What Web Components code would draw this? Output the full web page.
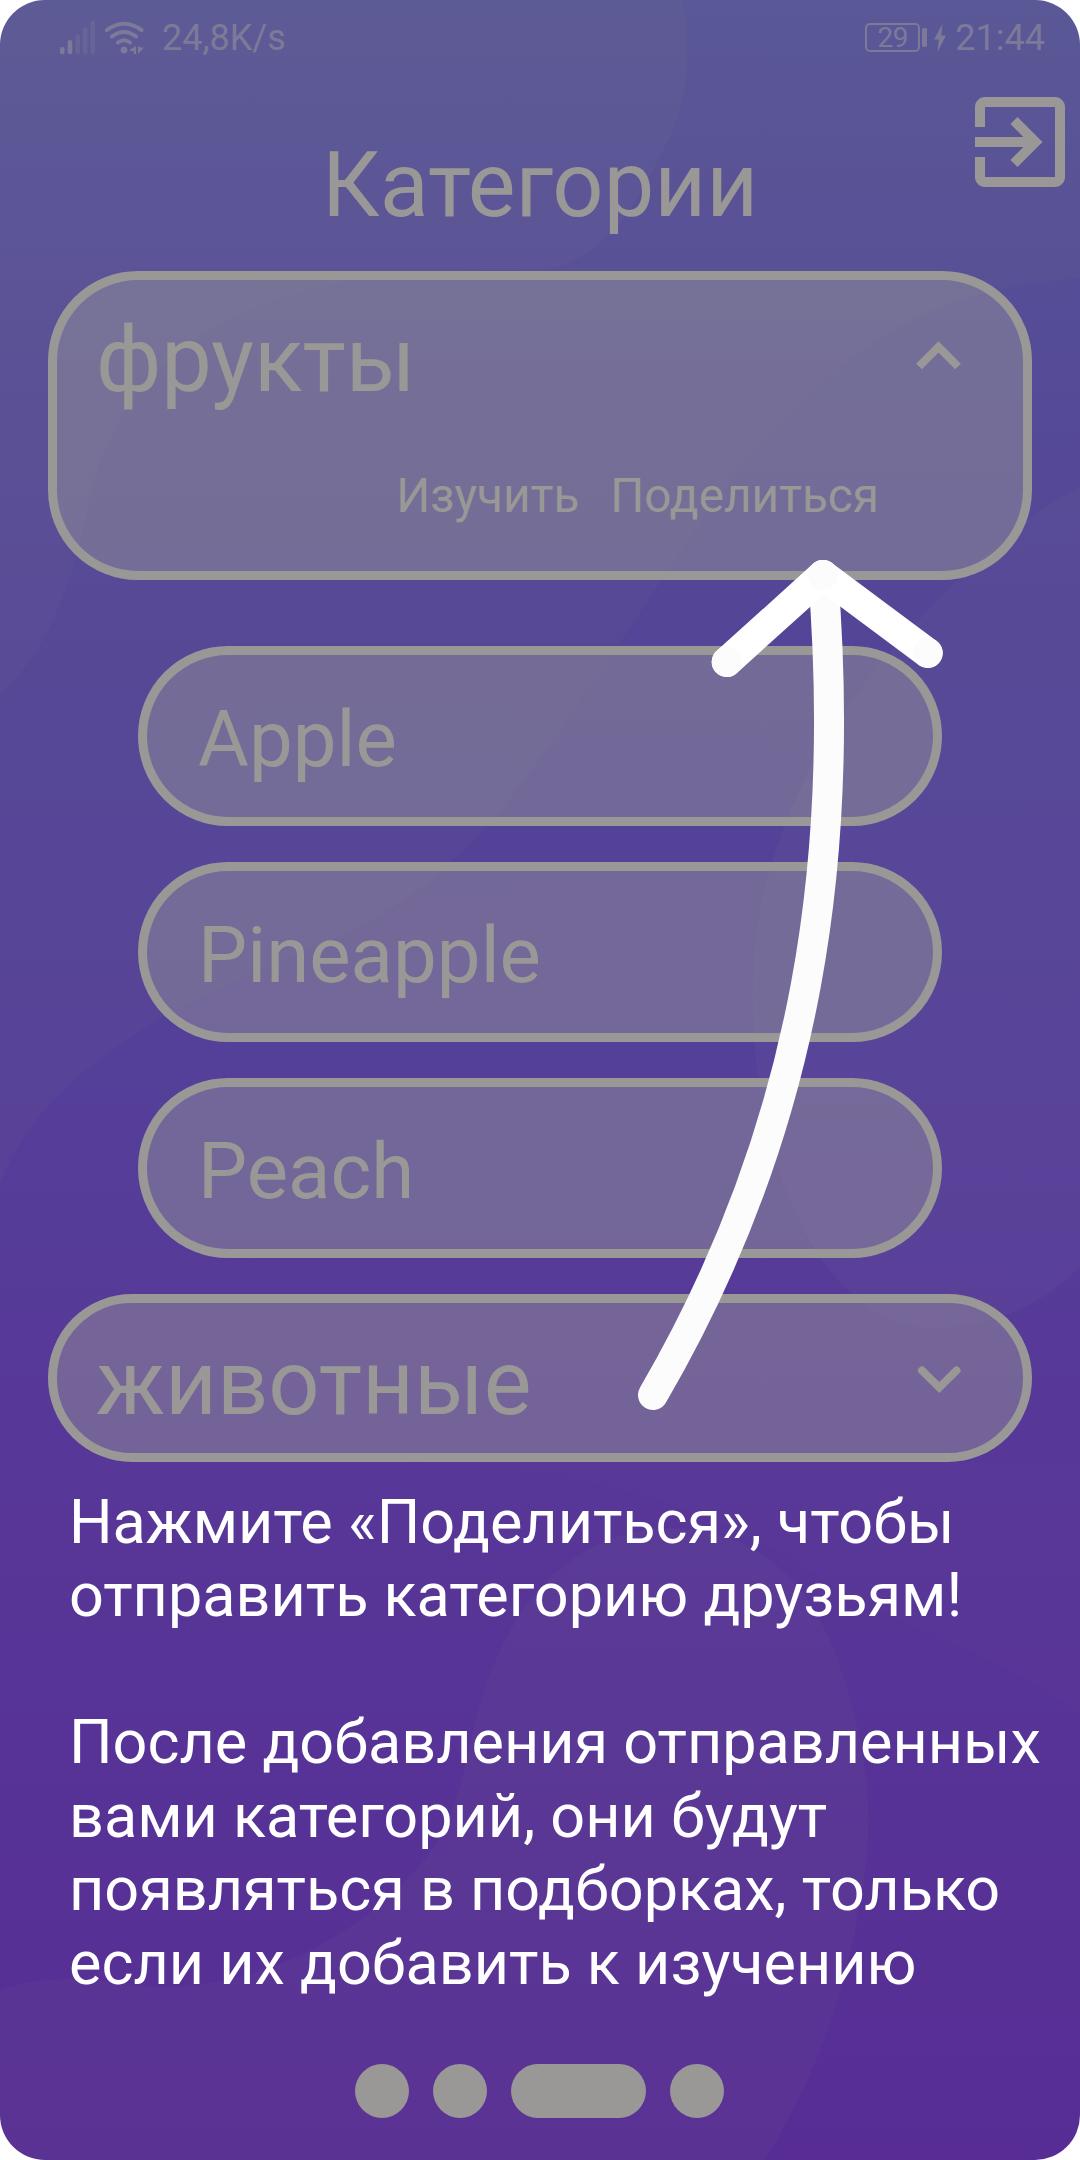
<!DOCTYPE html>
<html lang="ru">
<head>
<meta charset="utf-8">
<title>Категории</title>
<style>
html,body{margin:0;background:#fff}
body{font-family:Roboto,"Noto Sans",sans-serif;width:1080px;height:2160px;overflow:hidden}
</style>
</head>
<body>
<app-screen>
  <status-bar speed="24,8K/s" battery="29" time="21:44"></status-bar>
  <page-header>Категории</page-header>
  <category-card open>фрукты
    <span slot="action">Изучить</span><span slot="action">Поделиться</span>
  </category-card>
  <word-list>
    <word-pill>Apple</word-pill>
    <word-pill>Pineapple</word-pill>
    <word-pill>Peach</word-pill>
  </word-list>
  <category-card>животные</category-card>
  <guide-text>
    <p>Нажмите «Поделиться», чтобы<br>отправить категорию друзьям!</p>
    <p>После добавления отправленных<br>вами категорий, они будут<br>появляться в подборках, только<br>если их добавить к изучению</p>
  </guide-text>
  <page-dots count="4" active="2"></page-dots>
  <guide-arrow slot="overlay"></guide-arrow>
</app-screen>
<script>
const define = (name, render) => customElements.define(name, class extends HTMLElement {
  connectedCallback() {
    if (!this.shadowRoot) this.attachShadow({mode: 'open'}).innerHTML = render(this);
  }
});

define('app-screen', () => `
<style>
:host{display:block;position:relative;width:1080px;height:2160px;border-radius:45px;overflow:hidden;color:#999897}
.bg{position:absolute;inset:0;display:block}
main{position:relative;display:flex;flex-direction:column;height:100%}
</style>
<svg class="bg" width="1080" height="2160" viewBox="0 0 1080 2160" aria-hidden="true">
  <defs>
    <linearGradient id="g" x1="0" y1="0" x2="0" y2="1">
      <stop offset="0" stop-color="#575597"/><stop offset=".28" stop-color="#544597"/><stop offset=".5" stop-color="#543f99"/><stop offset=".65" stop-color="#573898"/><stop offset="1" stop-color="#572d95"/>
    </linearGradient>
  </defs>
  <rect width="1080" height="2160" fill="url(#g)"/>
  <g fill="#999">
    <path fill-opacity=".055" d="M0 0H1080V278C985 284 900 315 840 368C735 455 690 540 615 650C535 765 490 840 405 900C320 955 230 975 150 1025C70 1075 25 1120 0 1184Z"/>
    <path fill-opacity=".042" d="M0 0H682C694 60 686 110 661 155C630 220 595 262 540 271C420 268 300 275 200 335C130 385 100 440 85 520C68 600 40 660 0 693Z"/>
    <path fill-opacity=".06" d="M1080 487C1010 525 960 575 910 630C840 705 770 810 754 950C747 1060 765 1175 820 1257C860 1315 900 1330 943 1328C1000 1325 1050 1300 1080 1266Z"/>
    <path fill-opacity=".018" d="M0 1462H400C560 1465 710 1500 830 1585C920 1635 1010 1660 1080 1715V1462H0Z"/>
    <path fill-opacity=".055" d="M0 1990C30 1978 80 1976 120 1983C210 1998 310 1965 385 1900C480 1820 455 1750 496 1660C530 1580 590 1528 675 1528C760 1530 810 1585 838 1660C865 1740 873 1800 866 1865C850 1985 820 2070 765 2160H0Z"/>
  </g>
</svg>
<main><slot></slot></main><slot name="overlay"></slot>`);

define('status-bar', el => `
<style>
:host{display:flex;align-items:center;height:74px;padding:1px 35px 0 60px;color:#7d7a99;font-size:36px;line-height:42px;box-sizing:border-box}
svg{display:block}
.speed{margin-left:16px}
.right{margin-left:auto;display:flex;align-items:center}
.bat{box-sizing:border-box;width:55px;height:29px;border:2px solid;border-radius:5px;font-size:28px;line-height:26px;text-align:center;letter-spacing:-.3px}
.cap{width:5px;height:19px;border-radius:2px;background:currentColor;margin-left:2px}
.bolt{margin:0 9px 0 7px}
</style>
<svg width="86" height="36" viewBox="60 18 86 36" fill="currentColor">
  <rect x="60" y="45" width="4.6" height="7.3" rx="2.3"/><rect x="67.7" y="38" width="4.6" height="14.3" rx="2.3"/>
  <g opacity=".33"><rect x="75.3" y="32" width="4.6" height="20.3" rx="2.3"/><rect x="83" y="25" width="4.6" height="27.3" rx="2.3"/><rect x="90.5" y="18.7" width="4.6" height="33.6" rx="2.3"/></g>
  <g fill="none" stroke="currentColor" stroke-width="4" stroke-linecap="round"><path d="M107 28Q124 15.500 141.500 28M112 34.500Q124 25.500 136 34.500M118 40.500Q124 36 130 40.500"/></g>
  <circle cx="124" cy="48" r="3.4"/><path d="M136 44v8h-2.300v-3h-4v-1.300zM138 44v8l6-6.600h-3.500z"/>
</svg>
<span class="speed">${el.getAttribute('speed')}</span>
<div class="right"><div class="bat">${el.getAttribute('battery')}</div><div class="cap"></div>
<svg class="bolt" width="12" height="28" viewBox="0 0 12 28" fill="currentColor"><path d="M8.500 0L0 15.500H4.800L3.500 28L12 11.500H7.200Z"/></svg>
<span>${el.getAttribute('time')}</span></div>`);

define('page-header', () => `
<style>
:host{display:grid;grid-template-columns:120px 1fr 120px;height:197px}
h1{margin:59px 0 0;font-weight:400;font-size:90px;line-height:106px;text-align:center;white-space:nowrap}
svg{display:block;margin-top:8px}
</style>
<span></span><h1><slot></slot></h1>
<svg width="120" height="120" viewBox="0 0 24 24" fill="currentColor"><path d="M10.090 15.590L11.500 17l5-5-5-5-1.410 1.410L12.670 11H3v2h9.670l-2.580 2.590zM19 3H5c-1.110 0-2 .9-2 2v4h2V5h14v14H5v-4H3v4c0 1.100.89 2 2 2h14c1.100 0 2-.9 2-2V5c0-1.100-.9-2-2-2z"/></svg>`);

define('category-card', el => {
  const open = el.hasAttribute('open');
  return `
<style>
:host{display:flex;flex-direction:column;box-sizing:border-box;margin:0 48px;height:168px;flex:none;border:9px solid #999897;border-radius:90px;background:rgba(153,153,153,.45)}
:host([open]){height:309px}
.row{display:flex;justify-content:space-between;padding:28px 62px 0 39px;font-size:90px;line-height:106px}
.row svg{display:block;margin-top:${open ? 33 : 34}px;flex:none}
.actions{display:flex;gap:31px;justify-content:flex-end;padding:54px 144px 0 0;font-size:47.700px;line-height:56px}
</style>
<div class="row"><span><slot></slot></span>
<svg width="46" height="30" viewBox="0 0 46 30" fill="none" stroke="currentColor" stroke-width="8"><path ${open ? 'd="M4 25.500L23.500 6L43 25.500"' : 'stroke-linecap="round" d="M7 5.500L24.300 22.500L41.500 5.500"'}/></svg></div>
${open ? '<div class="actions"><slot name="action"></slot></div>' : ''}`;
});

define('word-list', () => `
<style>:host{display:flex;flex-direction:column;gap:36px;padding:66px 138px 36px}</style><slot></slot>`);

define('word-pill', () => `
<style>:host{display:block;box-sizing:border-box;height:180px;border:9px solid #999897;border-radius:90px;background:rgba(153,153,153,.45);padding:39px 0 0 51px;font-size:78px;line-height:92px}</style><slot></slot>`);

define('guide-text', () => `
<style>
:host{display:flex;flex-direction:column;gap:73.500px;color:#fff;font-size:61.150px;line-height:73.500px;padding:23.500px 0 0 69px;white-space:nowrap}
::slotted(p){margin:0}
</style><slot></slot>`);

define('page-dots', el => {
  const n = +el.getAttribute('count'), a = +el.getAttribute('active');
  return `
<style>
:host{display:flex;justify-content:center;gap:24px;margin-top:auto;padding:0 1px 42px 0}
i{width:54px;height:54px;border-radius:27px;background:#999897}
.on{width:135px}
</style>${Array.from({length: n}, (_, k) => `<i class="${k === a ? 'on' : ''}"></i>`).join('')}`;
});

define('guide-arrow', () => `
<style>:host{position:absolute;inset:0;pointer-events:none}svg{display:block}</style>
<svg width="1080" height="2160" viewBox="0 0 1080 2160" fill="none" stroke-linecap="round" stroke-linejoin="round" stroke-width="30">
  <path stroke="#fcfcfc" d="M823 575C845 848 812 1122 653 1395"/>
  <path stroke="#fff" d="M726.700 662L823 575L927.700 653"/>
  <g fill="#fcfcfc"><circle cx="726.700" cy="662" r="15"/><circle cx="823" cy="575" r="15"/><circle cx="927.700" cy="653" r="15"/></g>
</svg>`);
</script>
</body>
</html>
